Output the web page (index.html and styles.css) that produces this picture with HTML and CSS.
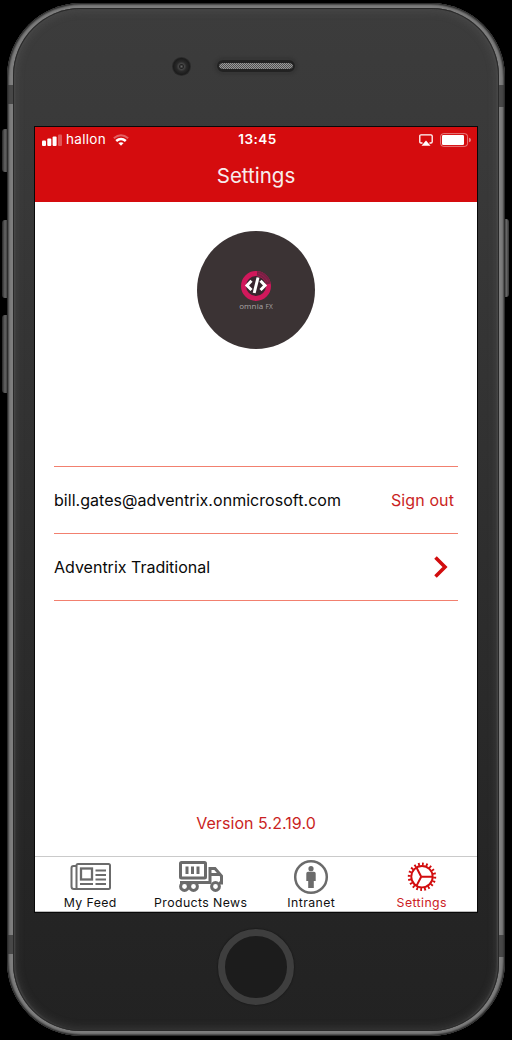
FILE: index.html
```html
<!DOCTYPE html>
<html lang="en">
<head>
<meta charset="utf-8">
<title>Settings</title>
<link rel="stylesheet" href="styles.css">
</head>
<body>
<div class="phone">
  <span class="key key-mute"></span>
  <span class="key key-up"></span>
  <span class="key key-down"></span>
  <span class="key key-power"></span>
  <div class="frame">
    <span class="antenna antenna-tl"></span>
    <span class="antenna antenna-tr"></span>
    <span class="antenna antenna-bl"></span>
    <span class="antenna antenna-br"></span>
    <div class="face">
      <div class="sensors">
        <span class="camera"></span>
        <span class="speaker"></span>
      </div>
      <main class="screen">
        <header class="header">
          <div class="status">
            <div class="status-left">
              <svg class="signal" width="20" height="12" viewBox="0 0 20 12" fill="#fff">
                <rect x="0" y="6.500" width="4" height="5.500" rx="1"/><rect x="5.300" y="4.500" width="4" height="7.500" rx="1"/><rect x="10.600" y="2.500" width="4" height="9.500" rx="1"/><rect x="16" y=".5" width="4" height="11.500" rx="1" opacity=".3"/>
              </svg>
              <span class="carrier">hallon</span>
              <svg class="wifi" width="16" height="12" viewBox="0 0 16 12" fill="none" stroke="#fff">
                <path d="M.8 4.200Q8-1.800 15.200 4.200" stroke-width="2" opacity=".35"/>
                <path d="M3.200 7Q8 3 12.800 7" stroke-width="2.600"/>
                <path d="M5.400 9Q8 7.300 10.600 9L8 11.700Z" fill="#fff" stroke="none"/>
              </svg>
            </div>
            <span class="time">13:45</span>
            <div class="status-right">
              <svg width="14" height="12" viewBox="0 0 14 12">
                <path d="M3.500 9H2Q.8 9 .8 7.800V2Q.8.800 2 .8H12Q13.200.8 13.200 2V7.800Q13.200 9 12 9H10.500" fill="none" stroke="#fff" stroke-width="1.300"/>
                <path d="M7 6.500L11.500 11.800H2.500Z" fill="#fff"/>
              </svg>
              <svg width="31" height="14" viewBox="0 0 31 14">
                <rect x=".6" y=".6" width="27" height="12.800" rx="3" fill="none" stroke="#fff" opacity=".45"/>
                <rect x="2" y="2" width="22" height="10" rx="1.200" fill="#fff"/>
                <path d="M29 4.800Q31 5.300 31 7T29 9.200Z" fill="#fff" opacity=".5"/>
              </svg>
            </div>
          </div>
          <h1 class="title">Settings</h1>
        </header>
        <div class="content">
          <div class="avatar">
            <svg width="32" height="30" viewBox="0 0 32 30">
              <circle cx="16" cy="15" r="12.500" fill="#38252e" stroke="#d0185b" stroke-width="5"/>
              <path d="M17 2.500A12.500 12.500 0 0 1 28.300 13" fill="none" stroke="#782044" stroke-width="5"/>
              <path d="M18 2.500Q25 4 28 11M17 4.500Q23 6 26 11" fill="none" stroke="#a12050" stroke-width=".7"/>
              <path d="M11.500 9.800L7 14.500L11.500 19M20.500 9.800L25 14.500L20.500 19" fill="none" stroke="#fff" stroke-width="3"/>
              <path d="M18 6.500L14.200 22" stroke="#fff" stroke-width="3"/>
            </svg>
            <span class="brand">omnia <small class="brand-suffix">FX</small></span>
          </div>
          <div class="list">
            <div class="row"><span class="email">bill.gates@adventrix.onmicrosoft.com</span><a class="signout">Sign out</a></div>
            <div class="row"><span class="tenant">Adventrix Traditional</span>
              <svg class="chevron" width="14" height="22" viewBox="0 0 14 22"><path d="M1.500 1.500L11 11L1.500 20.500" fill="none" stroke="#d20d0e" stroke-width="3.600"/></svg>
            </div>
          </div>
          <p class="version">Version 5.2.19.0</p>
        </div>
        <nav class="tabs">
          <a class="tab">
            <svg class="icon-feed" width="42" height="36" viewBox="0 0 42 36" fill="none" stroke="#6b6b6b" stroke-width="2">
              <rect x="6.500" y="5" width="33.500" height="25" rx="1.500"/>
              <path d="M6.500 7H3.500Q1.500 7 1.500 9V27.500Q1.500 30 4 30H8"/>
              <rect x="11" y="9.500" width="11" height="11" stroke-width="2.300"/>
              <path d="M25.500 11.500H36M25.500 16H36M25.500 20.500H36M10 25H23M25.500 25H36"/>
            </svg>
            <span class="label feed">My Feed</span>
          </a>
          <a class="tab">
            <svg width="46" height="36" viewBox="0 0 46 36" fill="none" stroke="#6b6b6b" stroke-width="3">
              <rect x="2.500" y="3.500" width="25" height="15.500" rx="1"/>
              <path d="M9 7.500V15M14.500 7.500V15M20 7.500V15"/>
              <path d="M2 23.500H33M32 24V9.500H37L43.500 17V24H41M32 15.500H42"/>
              <circle cx="6.500" cy="27.500" r="3.900" fill="#fff"/><circle cx="15.500" cy="27.500" r="3.900" fill="#fff"/><circle cx="37.500" cy="27.500" r="3.900" fill="#fff"/>
            </svg>
            <span class="label products">Products News</span>
          </a>
          <a class="tab">
            <svg width="36" height="36" viewBox="0 0 36 36" fill="#6b6b6b">
              <circle cx="18" cy="18" r="15.800" fill="none" stroke="#6b6b6b" stroke-width="2.500"/>
              <circle cx="18" cy="9.700" r="2.600"/>
              <path d="M15 12.800H21Q22.700 12.800 22.700 14.500V22H20.800V29H15.200V22H13.300V14.500Q13.300 12.800 15 12.800Z"/>
            </svg>
            <span class="label intranet">Intranet</span>
          </a>
          <a class="tab active">
            <svg width="36" height="36" viewBox="0 0 36 36" fill="none" stroke="#d20d0e">
              <circle cx="18" cy="17.700" r="12.700" stroke-width="3" pathLength="80" stroke-dasharray="1.800 2.200"/>
              <circle cx="18" cy="17.700" r="10.700" stroke-width="1.900"/>
              <path d="M17.200 17.700H28M17.200 17.700L12.600 8.800M17.200 17.700L12.600 26.600" stroke-width="2"/>
            </svg>
            <span class="label settings">Settings</span>
          </a>
        </nav>
      </main>
      <div class="chin"><span class="home"></span></div>
    </div>
  </div>
</div>
</body>
</html>
```
FILE: styles.css
```css
* { box-sizing: border-box; }
body { margin: 0; background: #000; font-family: Inter, sans-serif; }
svg { display: block; flex: none; }
.phone { position: relative; width: 512px; height: 1040px; padding: 3px 7px 4px; }
.frame {
  position: relative; height: 1033px; padding: 5px 6px 5px; border-radius: 74px;
  background: #7e7e7e;
  box-shadow: inset 0 0 1px 1px #2a2a2a, inset 0 0 2px 2px #484848;
}
.face {
  height: 1023px; padding: 0 22px; border-radius: 68px; display: flex; flex-direction: column;
  background: linear-gradient(#3c3c3c 0, #393939 15%, #252525 85%, #222 100%);
  box-shadow: inset 0 0 0 1px #292929, inset 2px 0 2px #484848, inset -2px 0 2px #484848, inset 0 0 8px 3px rgba(105,105,105,.3);
}
.sensors { height: 119px; flex: none; display: flex; padding: 49px 0 0 137px; }
.camera { width: 19px; height: 19px; border-radius: 50%; background: radial-gradient(circle, #666 0, #222 2px, #444 3px, #292929 5px, #1c1c1c 8px, #292929 9px); }
.speaker {
  width: 78px; height: 12px; margin: 3px 0 0 26px; border-radius: 7px; border: 2px solid #222;
  background: conic-gradient(#999 25%, #505050 0 50%, #999 0 75%, #505050 0) 0 0 / 2px 2px;
  background-clip: padding-box; box-shadow: 0 0 2px 3px #363636; border-width: 3px 2px;
}
.screen { position: relative; height: 785px; width: 442px; flex: none; display: flex; flex-direction: column; background: #fff; box-shadow: 0 0 0 1px #080808; }
.header { height: 75px; flex: none; background: #d50c0e; color: #fff; }
.status { height: 25px; display: grid; grid-template-columns: 1fr 60px 1fr; align-items: center; font-size: 14px; line-height: 25px; }
.status-left { display: flex; align-items: center; padding-left: 7px; }
.carrier { margin: 0 7px 0 4px; font-size: 13.5px; letter-spacing: .3px; }
.time { padding-left: 3px; text-align: center; font-size: 13.5px; font-weight: 600; letter-spacing: .5px; }
.status-right { display: flex; align-items: center; justify-content: flex-end; gap: 7px; padding-right: 6px; }
.title { margin: 8px 0 0; text-align: center; font-size: 20.5px; line-height: 32px; font-weight: 400; letter-spacing: 0; color: #f7eded; }
.content { flex: 1; display: flex; flex-direction: column; align-items: center; padding-top: 28.6px; }
.avatar { width: 118px; height: 118px; flex: none; border-radius: 50%; background: #3b3334; display: flex; flex-direction: column; align-items: center; padding-top: 40px; }
.brand { font-family: "Open Sans", sans-serif; font-size: 8px; line-height: 10px; color: #aaa5a6; letter-spacing: .1px; }
.brand-suffix { font-size: 6.5px; }
.list { width: 404px; margin-top: 117.4px; border-top: 1px solid #f2806f; }
.row { height: 67px; display: flex; align-items: center; justify-content: space-between; border-bottom: 1px solid #f2806f; font-size: 16px; color: #090909; }
.email { letter-spacing: .04px; }
.tenant { letter-spacing: 0; }
.signout { padding-right: 4px; color: #ca1f23; letter-spacing: .1px; }
.chevron { margin: 1px 10px 0 0; }
.version { margin: 210px 0 0; font-size: 16px; line-height: 24px; color: #ca1f23; letter-spacing: .06px; }
.tabs { height: 56px; flex: none; display: grid; grid-template-columns: repeat(4, 1fr); border-top: 1px solid #cacaca; border-bottom: 1px solid #bbb; }
.tab { display: flex; flex-direction: column; align-items: center; color: #101010; padding-top: 1px; }
.tab svg { position: relative; top: .5px; }
.icon-feed { margin-left: 1.5px; }
.label { font-size: 12.3px; line-height: 18px; white-space: nowrap; letter-spacing: .4px; }
.active { color: #cc2024; }
.chin { flex: 1; display: flex; justify-content: center; padding-top: 17px; }
.home { width: 76px; height: 76px; border-radius: 50%; border: 7px solid #3e3e3e; background: #1c1c1c; box-shadow: 0 0 1px 1px #1d1d1d; }
.antenna { position: absolute; width: 5px; height: 19px; background: rgba(50,50,50,.7); }
.antenna-tl { left: 1px; top: 82px; }
.antenna-tr { right: 1px; top: 82px; height: 22px; }
.antenna-bl { left: 1px; top: 932px; }
.antenna-br { right: 1px; top: 932px; height: 22px; }
.key { position: absolute; left: 2px; width: 6px; background: linear-gradient(90deg, #252525, #656565 50%, #333); border-radius: 3px 0 0 3px; }
.key-mute { top: 129px; height: 43px; }
.key-up { top: 220px; height: 78px; }
.key-down { top: 315px; height: 78px; }
.key-power { left: 504px; top: 219px; height: 78px; width: 5px; border-radius: 0 3px 3px 0; }
```
